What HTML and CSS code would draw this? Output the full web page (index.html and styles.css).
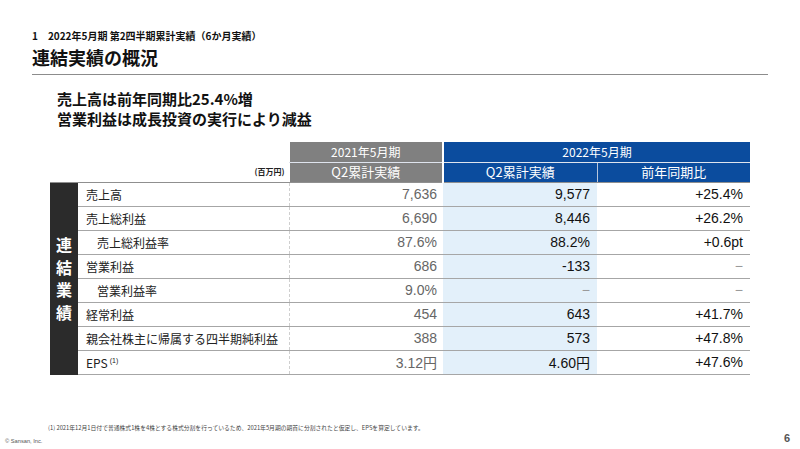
FILE: index.html
```html
<!DOCTYPE html>
<html lang="ja">
<head>
<meta charset="utf-8">
<title>連結実績の概況</title>
<link rel="stylesheet" href="styles.css">
</head>
<body>
<div class="slide">
  <header class="head">
    <div class="section">1　2022年5月期 第2四半期累計実績（6か月実績）</div>
    <h1 class="title">連結実績の概況</h1>
  </header>

  <div class="points">
    <p>売上高は前年同期比25.4%増</p>
    <p>営業利益は成長投資の実行により減益</p>
  </div>

  <table class="fin">
    <colgroup>
      <col class="w-side"><col class="w-label"><col class="w-val"><col class="w-val"><col class="w-last">
    </colgroup>
    <thead>
      <tr class="hr1">
        <th colspan="2" class="blank"></th>
        <th class="gray top">2021年5月期</th>
        <th colspan="2" class="blue top">2022年5月期</th>
      </tr>
      <tr class="hr2">
        <th colspan="2" class="unit">(百万円)</th>
        <th class="gray">Q2累計実績</th>
        <th class="blue split">Q2累計実績</th>
        <th class="blue">前年同期比</th>
      </tr>
    </thead>
    <tbody>
      <tr>
        <td rowspan="8" class="side"><div class="side-text">連結業績</div></td>
        <td class="label">売上高</td>
        <td class="c1">7,636</td>
        <td class="c2">9,577</td>
        <td class="c3">+25.4%</td>
      </tr>
      <tr>
        <td class="label">売上総利益</td>
        <td class="c1">6,690</td>
        <td class="c2">8,446</td>
        <td class="c3">+26.2%</td>
      </tr>
      <tr>
        <td class="label indent">売上総利益率</td>
        <td class="c1">87.6%</td>
        <td class="c2">88.2%</td>
        <td class="c3">+0.6pt</td>
      </tr>
      <tr>
        <td class="label">営業利益</td>
        <td class="c1">686</td>
        <td class="c2">-133</td>
        <td class="c3"><span class="dash">−</span></td>
      </tr>
      <tr>
        <td class="label indent">営業利益率</td>
        <td class="c1">9.0%</td>
        <td class="c2"><span class="dash">−</span></td>
        <td class="c3"><span class="dash">−</span></td>
      </tr>
      <tr>
        <td class="label">経常利益</td>
        <td class="c1">454</td>
        <td class="c2">643</td>
        <td class="c3">+41.7%</td>
      </tr>
      <tr>
        <td class="label">親会社株主に帰属する四半期純利益</td>
        <td class="c1">388</td>
        <td class="c2">573</td>
        <td class="c3">+47.8%</td>
      </tr>
      <tr>
        <td class="label">EPS<sup class="ref">(1)</sup></td>
        <td class="c1">3.12円</td>
        <td class="c2">4.60円</td>
        <td class="c3">+47.6%</td>
      </tr>
    </tbody>
  </table>

  <footer class="foot">
    <p class="note">(1) 2021年12月1日付で普通株式1株を4株とする株式分割を行っているため、2021年5月期の期首に分割されたと仮定し、EPSを算定しています。</p>
    <div class="bottom">
      <span class="copy">© Sansan, Inc.</span>
      <span class="page">6</span>
    </div>
  </footer>
</div>
</body>
</html>
```

FILE: styles.css
```css
* {
  box-sizing: border-box;
  margin: 0;
  padding: 0;
}

html, body {
  width: 800px;
  height: 449px;
  background: #fff;
  overflow: hidden;
}

body {
  font-family: "Liberation Sans", "Noto Sans CJK JP", sans-serif;
  color: #222;
}

.slide {
  width: 800px;
  height: 449px;
  display: flex;
  flex-direction: column;
  padding-bottom: 4px;
}

/* header */
.head {
  margin: 29px 32px 0;
  padding-bottom: 5px;
  border-bottom: 1px solid #8c8c8c;
}

.section {
  font-family: "Noto Sans CJK JP", sans-serif;
  font-size: 10px;
  line-height: 14px;
  font-weight: bold;
  color: #111;
}

.title {
  font-family: "Noto Sans CJK JP", sans-serif;
  font-size: 18px;
  line-height: 24px;
  margin-top: 2px;
  font-weight: bold;
  color: #111;
}

/* key points */
.points {
  margin: 14px 0 0 57px;
  font-family: "Noto Sans CJK JP", sans-serif;
  font-size: 15px;
  line-height: 20px;
  font-weight: bold;
  color: #111;
}

/* table */
.fin {
  margin: 13px 0 0 50px;
  width: 700px;
  border-collapse: collapse;
  table-layout: fixed;
}

.w-side { width: 28px; }
.w-label { width: 211px; }
.w-val { width: 154px; }
.w-last { width: 153px; }

.fin th {
  font-weight: normal;
  font-size: 12px;
  color: #fff;
  text-align: center;
  padding: 0;
  line-height: 18px;
  font-family: "Noto Sans CJK JP", sans-serif;
}

.hr1 th { height: 20px; }
.hr2 th {
  height: 20px;
  border-bottom: 1px solid #8f8f8f;
  font-size: 13px;
}

.gray {
  background: #808080;
  border-right: 2px solid #fff;
  border-left: 1px solid #fff;
}

.blue {
  background: #0b4c9e;
}

.top {
  border-bottom: 1px solid #dfe4ee;
}

.split {
  border-right: 1px solid #b8c6dc;
}

.fin th.unit {
  text-align: right;
  color: #222;
  font-size: 8px;
  font-weight: bold;
  padding-right: 4px;
  vertical-align: middle;
}

.fin td {
  height: 24px;
  padding: 0;
  border-bottom: 1px solid #a6a6a6;
  vertical-align: middle;
}

.fin td.side {
  background: #2b2b2b;
  border-bottom: 1px solid #2b2b2b;
  color: #fff;
  text-align: center;
}

.side-text {
  width: 16px;
  margin: 0 auto;
  font-family: "Noto Sans CJK JP", sans-serif;
  font-size: 16px;
  line-height: 22.5px;
  font-weight: bold;
}

.fin td.label {
  font-family: "Noto Sans CJK JP", sans-serif;
  font-size: 12px;
  padding-left: 8px;
  border-right: 1px dashed #cfcfcf;
  white-space: nowrap;
  color: #222;
}

.fin td.indent {
  padding-left: 19px;
}

.ref {
  font-family: "Liberation Sans", sans-serif;
  font-size: 7px;
  margin-left: 2px;
  vertical-align: 5px;
}

.c1, .c2, .c3 {
  text-align: right;
  font-size: 14px;
}

.fin td.c1 {
  color: #666;
  padding-right: 6px;
}

.fin td.c2 {
  background: #e3f0fa;
  color: #111;
  padding-right: 7px;
}

.fin td.c3 {
  color: #111;
  padding-right: 7px;
}

.dash {
  color: #9a9a9a;
}

/* footer */
.foot {
  margin-top: auto;
}

.note {
  margin-left: 48px;
  font-family: "Noto Sans CJK JP", sans-serif;
  font-size: 5.8px;
  line-height: 8px;
  color: #444;
  white-space: nowrap;
}

.bottom {
  display: flex;
  justify-content: space-between;
  align-items: flex-start;
  padding: 0 10px 0 5px;
}

.copy {
  margin-top: 5px;
  font-size: 5.7px;
  line-height: 8px;
  color: #555;
}

.page {
  font-size: 11px;
  line-height: 12px;
  font-weight: bold;
  color: #555;
}
```
